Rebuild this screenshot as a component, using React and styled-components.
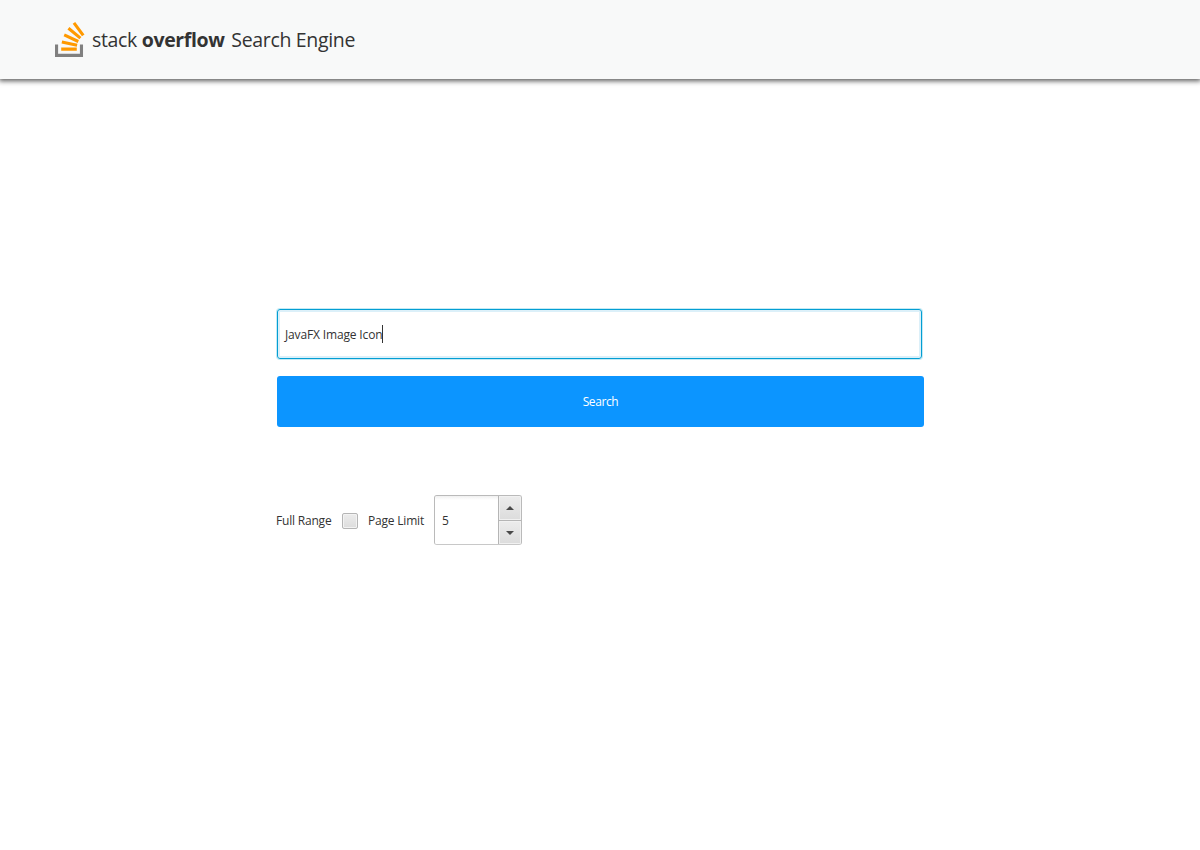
import React from "react";
import styled, { createGlobalStyle } from "styled-components";

const GlobalStyle = createGlobalStyle`
  * { box-sizing: border-box; }
  body {
    margin: 0;
    background: #fff;
    color: #333;
    font-family: "Open Sans", "Noto Sans", sans-serif;
    font-size: 12px;
  }
`;

const Page = styled.div`
  height: 850px;
  overflow: hidden;
`;

const Header = styled.header`
  display: flex;
  align-items: flex-start;
  height: 79px;
  padding: 22px 0 0 55px;
  background: #f8f9f9;
  box-shadow: 0 1px 5px 1px rgba(0, 0, 0, 0.65);
`;

const Logo = styled.svg`
  width: 30px;
  height: 35px;
  flex: none;
`;

const Title = styled.h1`
  margin: 3px 0 0 7px;
  font-size: 19.5px;
  line-height: 30px;
  font-weight: 400;
  letter-spacing: -0.33px;
  white-space: pre;
`;

const Strong = styled.strong`
  margin-right: 2px;
  font-weight: 700;
  letter-spacing: -0.38px;
`;

const Form = styled.main`
  display: flex;
  flex-direction: column;
  width: 648px;
  margin: 230px 0 0 276px;
`;

const SearchField = styled.div`
  display: flex;
  align-items: center;
  width: 645px;
  height: 50px;
  margin-left: 1px;
  padding-left: 7px;
  border: 1px solid #039ed3;
  border-radius: 3px;
  box-shadow: 0 0 0 1px #c4eaf5, inset 0 0 0 2px #dcf0f9;
`;

const Label = styled.span`
  font-size: 12px;
  line-height: 18px;
  white-space: nowrap;
  letter-spacing: ${(p) => p.$spacing || "0"};
`;

const FieldText = styled(Label)`
  padding-top: 2px;
`;

const Caret = styled.span`
  width: 1px;
  height: 18px;
  background: #333;
`;

const SearchButton = styled.button`
  height: 51px;
  margin: 17px 0 0 1px;
  padding: 0;
  border: 0;
  border-radius: 3px;
  background: #0c95ff;
  color: #fff;
  font-family: inherit;
`;

const Options = styled.div`
  display: flex;
  align-items: center;
  height: 50px;
  margin-top: 68px;
`;

const LabelCell = styled.div`
  width: ${(p) => p.$width}px;
  padding-top: 2px;
`;

const CheckBox = styled.span`
  width: 16px;
  height: 16px;
  margin-right: 10px;
  margin-top: 2px;
  border: 1px solid #b5b5b5;
  border-radius: 2px;
  background: linear-gradient(#ececec, #dddddd);
  box-shadow: inset 0 0 0 1px #f3f3f3;
`;

const Spinner = styled.div`
  display: flex;
  width: 88px;
  height: 50px;
  border: 1px solid #bababa;
  border-bottom-color: #c8c8c8;
  border-radius: 3px;
  overflow: hidden;
`;

const SpinnerValue = styled.div`
  display: flex;
  align-items: center;
  flex: 1;
  padding: 2px 0 0 7px;
  background: linear-gradient(#f0f0f0, #fff 4px);
`;

const Arrows = styled.div`
  display: flex;
  flex-direction: column;
  width: 23px;
  border-left: 1px solid #b5b5b5;
`;

const ArrowButton = styled.div`
  display: flex;
  align-items: center;
  justify-content: center;
  height: ${(p) => (p.$first ? 25 : 23)}px;
  border-bottom: ${(p) => (p.$first ? "1px solid #b5b5b5" : "0")};
  background: linear-gradient(#ececec, #dcdcdc);
  box-shadow: inset 0 0 0 1px #f1f1f1;
`;

const ArrowIcon = styled.svg`
  width: 8px;
  height: 4px;
  fill: #494949;
`;

export default function App() {
  return (
    <Page>
      <GlobalStyle />
      <Header>
        <Logo viewBox="22.6 14.9 74.4 86.8" preserveAspectRatio="xMinYMin meet">
          <path fill="#808080" d="M84.4 93.8V70.6h7.7v30.9H22.6V70.6h7.7v23.2z" />
          <path
            fill="#ff9900"
            d="M38.8 68.4l37.8 7.9 1.6-7.6-37.8-7.9-1.6 7.6zm5-18l35 16.3 3.2-7-35-16.4-3.2 7.1zm9.7-17.2l29.7 24.7 4.9-5.9-29.7-24.7-4.9 5.9zm19.2-18.3l-6.2 4.6 23 31 6.2-4.6-23-31zM38 86h38.6v-7.7H38V86z"
          />
        </Logo>
        <Title>
          stack <Strong>overflow</Strong> Search Engine
        </Title>
      </Header>
      <Form>
        <SearchField>
          <FieldText $spacing="-0.15px">JavaFX Image Icon</FieldText>
          <Caret />
        </SearchField>
        <SearchButton>
          <Label $spacing="-0.4px">Search</Label>
        </SearchButton>
        <Options>
          <LabelCell $width={66}>
            <Label $spacing="-0.2px">Full Range</Label>
          </LabelCell>
          <CheckBox />
          <LabelCell $width={66}>
            <Label $spacing="-0.2px">Page Limit</Label>
          </LabelCell>
          <Spinner>
            <SpinnerValue>
              <Label>5</Label>
            </SpinnerValue>
            <Arrows>
              <ArrowButton $first>
                <ArrowIcon viewBox="0 0 8 4">
                  <path d="M0 4L4 0l4 4z" />
                </ArrowIcon>
              </ArrowButton>
              <ArrowButton>
                <ArrowIcon viewBox="0 0 8 4">
                  <path d="M0 0h8L4 4z" />
                </ArrowIcon>
              </ArrowButton>
            </Arrows>
          </Spinner>
        </Options>
      </Form>
    </Page>
  );
}
